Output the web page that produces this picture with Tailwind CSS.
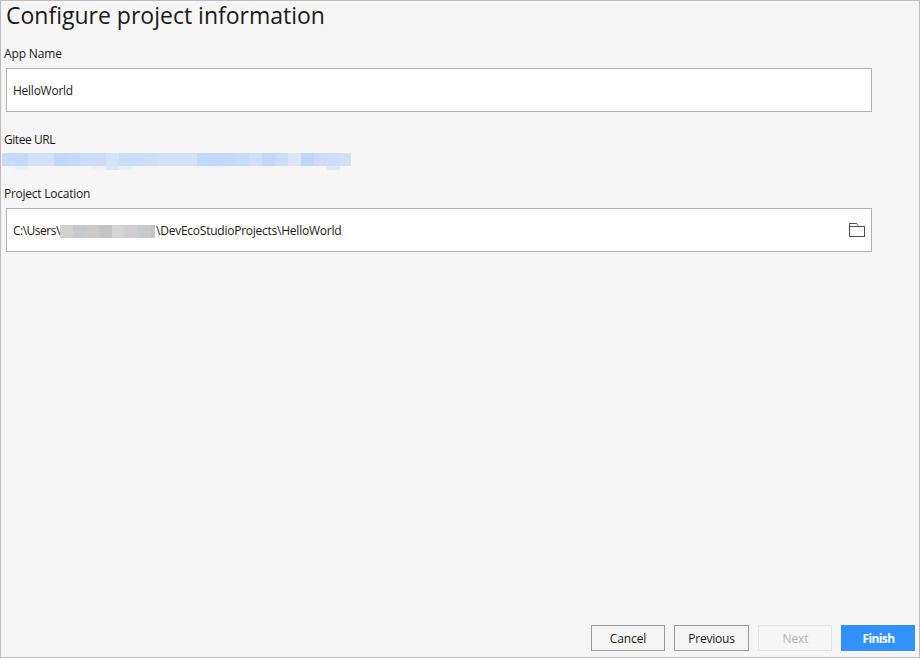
<!DOCTYPE html>
<html lang="en">
<head>
<meta charset="utf-8">
<title>Configure project information</title>
<script src="https://cdn.jsdelivr.net/npm/@tailwindcss/browser@4"></script>
</head>
<body class="font-['Open_Sans','Noto_Sans',sans-serif] text-[12px] leading-4 text-[#1a1a1a]">
<main class="flex h-[658px] w-[920px] flex-col border border-[#bcbcbc] bg-[#f6f6f6]">
  <h1 class="h-7 pl-[5px] text-[23px] leading-7 whitespace-nowrap">Configure project information</h1>
  <section class="mt-[17px] flex flex-col">
    <label class="h-4 pl-[3px]"><span class="tracking-[-0.15px]">App Name</span></label>
    <div class="mt-1.5 ml-[5px] flex h-11 w-[866px] items-center border border-[#b1b1b1] bg-white pt-0.5 pl-1.5"><span class="tracking-[-0.25px]">HelloWorld</span></div>
  </section>
  <section class="mt-5 flex flex-col">
    <label class="h-4 pl-[3px]"><span class="tracking-[-0.45px]">Gitee URL</span></label>
    <div class="mt-[5px] ml-px flex h-[13px] w-[349px]">
      <i class="w-[13px] bg-[#c8dcf7]"></i><i class="w-[13px] bg-[#c5daf6]"></i><i class="w-[26px] bg-[#d0e1f8]"></i><i class="w-[13px] bg-[#c3d8f8]"></i><i class="w-[13px] bg-[#c5d9f8]"></i><i class="w-[13px] bg-[#c9dcf8]"></i><i class="w-[13px] bg-[#ccdcf7]"></i><i class="w-[13px] bg-[#d3e3f8]"></i><i class="w-[26px] bg-[#c9ddf6]"></i><i class="w-[13px] bg-[#cddff7]"></i><i class="w-[39px] bg-[#d0e1f8]"></i><i class="w-[13px] bg-[#c3d9f8]"></i><i class="w-[13px] bg-[#c2d8f8]"></i><i class="w-[13px] bg-[#c3d9f7]"></i><i class="w-[13px] bg-[#c7dcf8]"></i><i class="w-[13px] bg-[#cfdff8]"></i><i class="w-[13px] bg-[#c3d7f8]"></i><i class="w-[13px] bg-[#ccddf6]"></i><i class="w-[13px] bg-[#dce7f6]"></i><i class="w-[13px] bg-[#c1d7f7]"></i><i class="w-[13px] bg-[#ccdbf7]"></i><i class="w-[13px] bg-[#cfdef8]"></i><i class="w-[11px] bg-[#d0e1f8]"></i>
    </div>
    <div class="ml-px flex h-1 w-[349px]">
      <i class="ml-[13px] w-[13px] bg-[#eceff6]"></i><i class="ml-[65px] w-[13px] bg-[#eff1f6]"></i><i class="w-[13px] bg-[#dae7f7]"></i><i class="w-[13px] bg-[#e9eff7]"></i><i class="ml-[195px] w-[13px] bg-[#dfe8f7]"></i>
    </div>
  </section>
  <section class="mt-4 flex flex-col">
    <label class="h-4 pl-[3px]"><span class="tracking-[-0.25px]">Project Location</span></label>
    <div class="mt-1.5 ml-[5px] flex h-11 w-[866px] items-center border border-[#b1b1b1] bg-white pr-1.5 pl-1.5">
      <span class="w-[47px] pt-0.5 whitespace-nowrap"><span class="tracking-[-0.5px]">C:\Users\</span></span>
      <span class="mt-[3px] flex h-[13px] w-[95px]"><i class="w-[13px] bg-[#d2d1d1]"></i><i class="w-[13px] bg-[#c5c9cd]"></i><i class="w-[13px] bg-[#cbcacb]"></i><i class="w-[13px] bg-[#c4c4c5]"></i><i class="w-[13px] bg-[#d4d4d5]"></i><i class="w-[13px] bg-[#d1cccf]"></i><i class="w-[13px] bg-[#cac9ca]"></i><i class="w-1 bg-[#c2c5c8]"></i></span>
      <span class="pt-0.5 pl-px whitespace-nowrap"><span class="tracking-[-0.24px]">\DevEcoStudioProjects\HelloWorld</span></span>
      <svg class="ml-auto" width="16" height="14" viewBox="0 0 16 14" fill="none" stroke="#4d4d4d" shape-rendering="crispEdges"><path d="M.5 3.5h15v10H.5zM.5 3.5v-3h7"/><path d="M7.5.5l2.5 3" shape-rendering="auto" stroke="#777"/></svg>
    </div>
  </section>
  <footer class="mt-auto mb-1.5 flex h-[26px] justify-end gap-[9px] pr-1">
    <button class="w-[74px] border border-[#999] pt-0.5"><span class="tracking-[-0.1px]">Cancel</span></button>
    <button class="w-[75px] border border-[#999] pt-0.5"><span class="tracking-[-0.2px]">Previous</span></button>
    <button disabled class="w-[74px] border border-[#e3e3e3] pt-0.5 pl-px text-[#b3b3b3]"><span class="tracking-[-0.1px]">Next</span></button>
    <button class="w-[74px] bg-[#3391ff] pt-0.5 pl-px font-bold text-white"><span class="tracking-[-0.6px]">Finish</span></button>
  </footer>
</main>
</body>
</html>
